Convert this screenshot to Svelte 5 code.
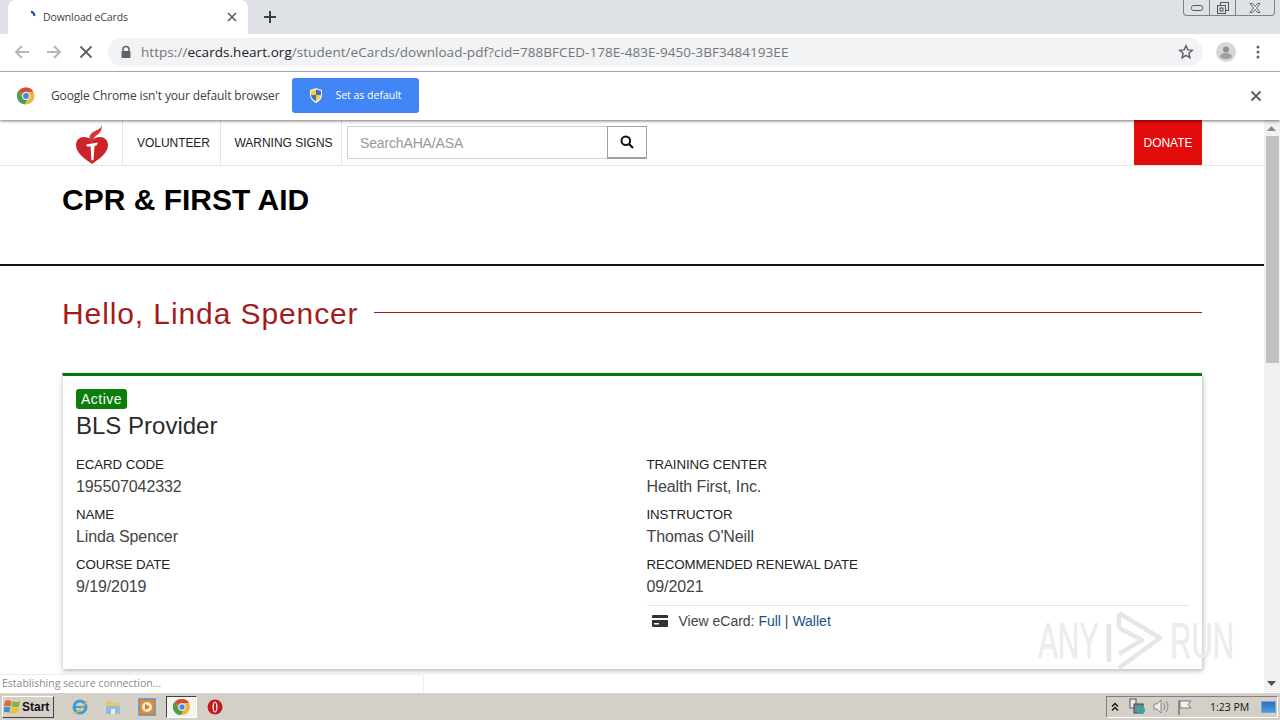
<script>
  const left = [["ECARD CODE","195507042332"],["NAME","Linda Spencer"],["COURSE DATE","9/19/2019"]];
  const right = [["TRAINING CENTER","Health First, Inc."],["INSTRUCTOR","Thomas O'Neill"],["RECOMMENDED RENEWAL DATE","09/2021"]];
</script>

<div class="screen">
  <header class="tabstrip">
    <div class="tab">
      <svg class="spin" width="16" height="16" viewBox="0 0 16 16"><path d="M4 2.500c2 .6 3.200 2 3.600 4.500" fill="none" stroke="#1a4a9c" stroke-width="2"/></svg>
      <span class="tabtitle">Download eCards</span>
      <svg class="tabx" width="12" height="12" viewBox="0 0 12 12"><path d="M2 2l8 8M10 2l-8 8" stroke="#5f6368" stroke-width="1.700"/></svg>
    </div>
    <svg class="plus" width="14" height="14" viewBox="0 0 14 14"><path d="M7 1v12M1 7h12" stroke="#3c4043" stroke-width="2"/></svg>
    <div class="winctl">
      <span class="wc w1"><svg width="14" height="8" viewBox="0 0 14 8"><rect x="1.500" y="1.500" width="11" height="5" rx="2" fill="none" stroke="#555"/></svg></span>
      <span class="wc w2"><svg width="14" height="14" viewBox="0 0 14 14"><rect x="4.500" y="1.500" width="8" height="8" fill="none" stroke="#555"/><rect x="1.500" y="4.500" width="8" height="8" fill="#dee1e6" stroke="#555"/><rect x="4" y="7" width="3" height="3" fill="none" stroke="#555"/></svg></span>
      <span class="wc w3"><svg width="14" height="12" viewBox="0 0 14 12"><path d="M2 1.500h2.500l2.500 3 2.500-3H12L8.500 6 12 10.500H9.500L7 7.500l-2.500 3H2L5.500 6z" fill="#eee" stroke="#666"/></svg></span>
    </div>
  </header>

  <div class="toolbar">
    <svg width="16" height="16" viewBox="0 0 16 16"><path d="M15 8H2M8 2L2 8l6 6" fill="none" stroke="#b4b6b9" stroke-width="2"/></svg>
    <svg class="fw" width="16" height="16" viewBox="0 0 16 16"><path d="M1 8h13M8 2l6 6-6 6" fill="none" stroke="#b4b6b9" stroke-width="2"/></svg>
    <svg class="st" width="14" height="14" viewBox="0 0 14 14"><path d="M1.500 1.500l11 11M12.500 1.500l-11 11" stroke="#5f6368" stroke-width="1.900"/></svg>
    <div class="omni">
      <svg class="lock" width="12" height="14" viewBox="0 0 12 14"><path d="M3 6V4.500a3 3 0 0 1 6 0V6" fill="none" stroke="#5f6368" stroke-width="1.500"/><rect x="1.500" y="6" width="9" height="7" rx="1" fill="#5f6368"/></svg>
      <span class="url"><span class="dim">https://</span>ecards.heart.org<span class="dim">/student/eCards/download-pdf?cid=788BFCED-178E-483E-9450-3BF3484193EE</span></span>
      <svg class="star" width="16" height="16" viewBox="0 0 16 16"><path d="M8 1.800l1.800 4.100 4.400.4-3.300 2.900 1 4.400L8 11.300l-3.900 2.300 1-4.400L1.800 6.300l4.400-.4z" fill="none" stroke="#5f6368" stroke-width="1.500"/></svg>
    </div>
    <svg class="avatar" width="20" height="20" viewBox="0 0 20 20"><circle cx="10" cy="10" r="10" fill="#d5d6d8"/><circle cx="10" cy="7.500" r="3" fill="#8d8f92"/><ellipse cx="10" cy="14" rx="6" ry="3" fill="#9d9fa2"/></svg>
    <svg class="menu" width="4" height="14" viewBox="0 0 4 14"><circle cx="2" cy="2" r="1.500" fill="#5f6368"/><circle cx="2" cy="7" r="1.500" fill="#5f6368"/><circle cx="2" cy="12" r="1.500" fill="#5f6368"/></svg>
  </div>

  <div class="infobar">
    <svg class="chrome" width="18" height="18" viewBox="0 0 18 18">
      <circle cx="9" cy="9" r="8.500" fill="#e8b93a"/>
      <path d="M9 .5a8.500 8.500 0 0 1 7.400 4.300H9a4.200 4.200 0 0 0-4 2.900L2 3.300A8.500 8.500 0 0 1 9 .5z" fill="#d9483b"/>
      <path d="M2 3.300l3.300 6.500A4.200 4.200 0 0 0 10 13l-2.300 4.400A8.500 8.500 0 0 1 2 3.300z" fill="#4a9e56"/>
      <circle cx="9" cy="9" r="3.600" fill="#4c84e0" stroke="#fff" stroke-width="1"/>
    </svg>
    <span class="infotext">Google Chrome isn't your default browser</span>
    <button class="setdefault">
      <svg width="16" height="17" viewBox="0 0 16 17"><path d="M8 1l6 2v5c0 4-3 6.500-6 8-3-1.500-6-4-6-8V3z" fill="#f0f0f0"/><path d="M8 2.500L13 4v4H8z" fill="#3d6fc4"/><path d="M8 8H3c.2 3 2.500 5 5 6.300z" fill="#3d6fc4"/><path d="M8 2.500L3 4v4h5z" fill="#f3cf45"/><path d="M8 8h5c-.2 3-2.500 5-5 6.300z" fill="#f3cf45"/></svg>
      <span>Set as default</span>
    </button>
    <svg class="infox" width="12" height="12" viewBox="0 0 12 12"><path d="M1.500 1.500l9 9M10.500 1.500l-9 9" stroke="#5f6368" stroke-width="2"/></svg>
  </div>

  <div class="viewport">
    <main class="page">
      <nav class="topnav">
        <div class="navinner">
          <div class="logo">
            <svg width="32" height="40" viewBox="0 0 32 40">
              <path d="M16 40C9 35 0 29 0 21c0-5 3.500-8 8-8 3.500 0 6 1.500 8 4 2-2.500 4.500-4 8-4 4.500 0 8 3 8 8 0 8-9 14-16 19z" fill="#c9252b"/>
              <path d="M25 0c1 4-2 5-6 7-4 2-7 5-5 11h4c-1-3 0-5 3-7 3-2 6-6 4-11z" fill="#d9333a"/>
              <path d="M10 20.500l12-2-1.500 3-2 .4L17.500 36 15.500 36.500 14.500 22.200l-3 .5z" fill="#fff"/>
            </svg>
          </div>
          <a class="navitem vol">VOLUNTEER</a>
          <a class="navitem warn">WARNING SIGNS</a>
          <div class="search">
            <span class="field">SearchAHA/ASA</span>
            <span class="sbtn"><svg width="14" height="14" viewBox="0 0 14 14"><circle cx="5.800" cy="5.800" r="4.300" fill="none" stroke="#111" stroke-width="2"/><path d="M9 9l4 4" stroke="#111" stroke-width="2.200"/></svg></span>
          </div>
          <a class="donate">DONATE</a>
        </div>
      </nav>

      <div class="brand"><h1>CPR &amp; FIRST AID</h1></div>

      <section class="content">
        <div class="hello"><h2>Hello, Linda Spencer</h2><span class="rule"></span></div>

        <article class="card">
          <span class="badge">Active</span>
          <h3>BLS Provider</h3>
          <div class="cols">
            <div class="col">
              {#each left as [k, v]}
                <div class="pair"><div class="k">{k}</div><div class="v">{v}</div></div>
              {/each}
            </div>
            <div class="col">
              {#each right as [k, v]}
                <div class="pair"><div class="k">{k}</div><div class="v">{v}</div></div>
              {/each}
              <div class="view">
                <svg width="16" height="12" viewBox="0 0 16 12"><path d="M1 0h14a1 1 0 0 1 1 1v10a1 1 0 0 1-1 1H1a1 1 0 0 1-1-1V1a1 1 0 0 1 1-1z" fill="#333"/><rect x="0" y="3" width="16" height="2" fill="#fff"/><rect x="2" y="8" width="5" height="1.500" fill="#fff"/></svg>
                <span class="vt">View eCard: <a>Full</a> | <a>Wallet</a></span>
              </div>
            </div>
          </div>
        </article>
      </section>
    </main>

    <aside class="scrollbar">
      <svg class="up" width="9" height="5" viewBox="0 0 9 5"><path d="M4.500 0L9 5H0z" fill="#8a8a8a"/></svg>
      <span class="thumb"></span>
      <svg class="down" width="9" height="5" viewBox="0 0 9 5"><path d="M4.500 5L0 0h9z" fill="#505050"/></svg>
    </aside>

    <div class="status">Establishing secure connection...</div>

    <div class="watermark">
      <span class="wmt any">ANY</span>
      <svg width="58" height="62" viewBox="0 0 58 62"><path d="M3 14V52M13 3L54 28 13 58M13 3V18M13 18L36 30 13 44" fill="none" stroke="#e6e6e6" stroke-width="4.500" stroke-linejoin="round"/></svg>
      <span class="wmt run">RUN</span>
    </div>
  </div>

  <footer class="taskbar">
    <button class="start">
      <svg width="17" height="16" viewBox="0 0 16 15"><path d="M1 2c2-1 4-1 6 0l-1 5c-2-1-4-1-6 0z" fill="#e5672d"/><path d="M8 2c2 1 5 1 7 0l-1 5c-2 1-5 1-7 0z" fill="#7fb53c"/><path d="M0 8c2-1 4-1 6 0l-1 5c-2-1-4-1-6 0z" fill="#3f8fd6"/><path d="M7 8c2 1 5 1 7 0l-1 5c-2 1-5 1-7 0z" fill="#f1c232"/></svg>
      <span>Start</span>
    </button>
    <div class="apps">
      <svg width="18" height="18" viewBox="0 0 18 18"><circle cx="9" cy="9" r="6" fill="none" stroke="#3f9ad8" stroke-width="3"/><path d="M4 9h10" stroke="#3f9ad8" stroke-width="2"/><path d="M2 15c3 1 10-5 14-12" fill="none" stroke="#e2b53a" stroke-width="1.500"/></svg>
      <svg width="18" height="18" viewBox="0 0 18 18"><path d="M2 3h6l1 2h7v11H2z" fill="#e3c66f"/><rect x="2" y="8" width="14" height="8" fill="#8fc0d8"/><rect x="7" y="11" width="4" height="5" fill="#e9eef2"/></svg>
      <svg class="media" width="18" height="18" viewBox="0 0 18 18"><rect x="1" y="1" width="16" height="16" fill="#e98a2a" stroke="#5d8fc4" stroke-width="1.500"/><circle cx="9" cy="9" r="5" fill="#f7f0e0"/><path d="M7 6l5 3-5 3z" fill="#e0781a"/></svg>
      <span class="active"><svg width="18" height="18" viewBox="0 0 18 18"><circle cx="9" cy="9" r="8" fill="#e8b93a"/><path d="M9 1a8 8 0 0 1 7 4H9a4 4 0 0 0-4 3L2 3.500A8 8 0 0 1 9 1z" fill="#d9483b"/><path d="M2 3.500l3 6A4 4 0 0 0 10 13l-2 4A8 8 0 0 1 2 3.500z" fill="#4a9e56"/><circle cx="9" cy="9" r="3.300" fill="#4c84e0" stroke="#fff"/></svg></span>
      <svg class="opera" width="16" height="16" viewBox="0 0 16 16"><circle cx="8" cy="8" r="7.500" fill="#c8171c"/><ellipse cx="8" cy="8" rx="2.500" ry="5.500" fill="#fff"/><ellipse cx="8" cy="8" rx="1.200" ry="4.500" fill="#c8171c"/></svg>
    </div>
    <div class="tray">
      <svg width="8" height="10" viewBox="0 0 8 10"><path d="M1 4.500l3-3 3 3M1 8.500l3-3 3 3" fill="none" stroke="#111" stroke-width="1.400"/></svg>
      <svg class="net" width="17" height="17" viewBox="0 0 17 17"><rect x="1" y="1" width="6" height="9" fill="#eee" stroke="#555"/><rect x="5" y="6" width="9" height="9" fill="#6d8aa0" stroke="#444"/><circle cx="12" cy="12" r="4" fill="#3ba7a0"/></svg>
      <svg width="17" height="15" viewBox="0 0 17 15"><path d="M1 5h3l4-4v13l-4-4H1z" fill="#eee" stroke="#888"/><path d="M10.500 4c1.500 2 1.500 5 0 7M13 2c2.500 3 2.500 8 0 11" fill="none" stroke="#888"/></svg>
      <svg width="16" height="16" viewBox="0 0 16 16"><path d="M2 1v15" stroke="#777" stroke-width="1.500"/><path d="M3 2h11l-3 3.500L14 9H3z" fill="#f2f2f2" stroke="#777"/></svg>
      <span class="clock">1:23 PM</span>
      <span class="desktop"></span>
    </div>
  </footer>
</div>

<style>
  :global(body) { margin: 0; overflow: hidden; }
  .screen { width: 1280px; height: 720px; display: flex; flex-direction: column; font-family: "Liberation Sans", Arial, sans-serif; background: #fff; overflow: hidden; }
  svg { display: block; flex: none; }

  .tabstrip { height: 34px; background: #dee1e6; display: flex; align-items: flex-end; position: relative; flex: none; }
  .tab { width: 240px; height: 34px; margin-left: 8px; background: #fff; border-radius: 8px 8px 0 0; display: flex; align-items: center; box-sizing: border-box; padding: 0 10px 0 19px; }
  .tabtitle { font-family: "Open Sans", sans-serif; font-size: 10.500px; color: #3c4043; flex: 1; letter-spacing: -.1px; }
  .plus { margin: 0 0 10px 15px; }
  .winctl { position: absolute; top: 0; right: 5px; width: 92px; height: 16px; display: flex; border: 1px solid #7c8087; border-top: 0; border-radius: 0 0 4px 4px; box-sizing: border-box; }
  .wc { display: flex; align-items: center; justify-content: center; border-right: 1px solid #7c8087; }
  .w1 { width: 25px; } .w2 { width: 25px; } .w3 { flex: 1; border-right: 0; }

  .toolbar { height: 35px; background: #fff; border-bottom: 1px solid #b9babc; display: flex; align-items: center; flex: none; padding: 0 0 2px 14px; }
  .fw { margin-left: 16px; }
  .st { margin-left: 17px; }
  .omni { width: 1095px; height: 28px; margin-left: 15px; background: #f1f3f4; border-radius: 14px; display: flex; align-items: center; position: relative; box-sizing: border-box; padding-left: 12px; }
  .url { font-family: "Open Sans", sans-serif; font-size: 13.500px; letter-spacing: .05px; margin-left: 9px; color: #202124; white-space: nowrap; }
  .dim { color: #72767a; }
  .star { position: absolute; right: 9px; top: 6px; }
  .avatar { margin-left: 13px; }
  .menu { margin-left: 20px; }

  .infobar { height: 48px; background: #fff; display: flex; align-items: center; flex: none; position: relative; padding-left: 17px; box-shadow: 0 1px 3px rgba(0,0,0,.55); z-index: 3; }
  .infotext { font-family: "Open Sans", sans-serif; font-size: 12px; color: #3c4043; margin: 0 0 2px 16px; white-space: nowrap; letter-spacing: -.14px; }
  .setdefault { margin: 0 0 2px 13px; width: 127px; height: 35px; border: 0; border-radius: 3px; background: #4285f4; color: #fff; font-family: "Open Sans", sans-serif; font-size: 10.500px; display: flex; align-items: center; padding: 0 0 0 16px; gap: 11px; }
  .infox { position: absolute; right: 18px; top: 18px; }

  .viewport { flex: 1; display: flex; position: relative; min-height: 0; }
  .page { flex: 1; min-width: 0; overflow: hidden; }
  .topnav { height: 46px; border-bottom: 1px solid #e5e5e5; box-sizing: border-box; }
  .navinner { margin: 0 62px; display: flex; height: 45px; }
  .logo { width: 60px; box-sizing: border-box; padding: 4px 0 0 14px; }
  .navitem { font-size: 12px; color: #222; display: flex; align-items: center; justify-content: center; border-left: 1px solid #e5e5e5; box-sizing: border-box; }
  .vol { width: 98px; padding-left: 4px; letter-spacing: -.05px; }
  .warn { width: 122px; padding-left: 5px; border-right: 1px solid #e5e5e5; }
  .search { margin: 6px 0 0 5px; width: 300px; height: 33px; border: 1px solid #d0d0d0; box-sizing: border-box; display: flex; }
  .field { flex: 1; font-size: 14px; color: #999; padding: 8px 0 0 12px; letter-spacing: -.15px; }
  .sbtn { width: 40px; margin: -1px -1px -1px 0; border: 1px solid #a0a0a0; border-bottom: 2px solid #a0a0a0; display: flex; align-items: center; justify-content: center; box-sizing: border-box; }
  .donate { margin-left: auto; width: 68px; background: #e20c0c; color: #fff; font-size: 12px; letter-spacing: -.05px; display: flex; align-items: center; justify-content: center; }

  .brand { height: 98px; border-bottom: 2px solid #111; padding-left: 62px; }
  h1 { margin: 0; padding-top: 16px; font-size: 30px; line-height: 36px; font-weight: 700; color: #000; }
  .content { padding: 0 62px; }
  .hello { display: flex; align-items: center; height: 96px; box-sizing: border-box; gap: 15px; padding-bottom: 1px; }
  h2 { margin: 0; font-size: 30px; font-weight: 400; color: #a31c1c; letter-spacing: .9px; white-space: nowrap; }
  .rule { flex: 1; height: 1px; background: #a31c1c; margin-top: -2px; }

  .card { height: 296px; border-top: 3px solid #007a00; border-left: 1px solid #e0e0e0; box-shadow: 1px 2px 5px rgba(0,0,0,.28); box-sizing: border-box; padding: 13px 13px 0; background: #fff; margin-top: 11px; }
  .badge { display: block; width: 51px; height: 20px; box-sizing: border-box; background: #0a7d0a; color: #fff; font-size: 14px; letter-spacing: .5px; line-height: 20px; text-align: center; border-radius: 3px; }
  h3 { margin: 3px 0 0; font-size: 24px; line-height: 28px; font-weight: 400; color: #2b2b2b; }
  .cols { display: flex; margin-top: 12px; }
  .col { width: 570.500px; flex: none; }
  .col + .col { flex: 1; }
  .pair { height: 50px; }
  .k { font-size: 13.300px; line-height: 20px; color: #222; padding-top: 3px; letter-spacing: -.1px; }
  .v { font-size: 16px; line-height: 23px; color: #444; letter-spacing: -.1px; }
  .view { border-top: 1px solid #e3e3e3; margin-top: 3px; padding: 6px 0 0 5px; display: flex; align-items: center; height: 18px; }
  .vt { font-size: 14px; color: #444; margin-left: 11px; }
  .vt a { color: #1a4f8a; }

  .scrollbar { width: 16px; background: #f1f1f1; position: relative; flex: none; }
  .up { position: absolute; top: 6px; left: 3px; }
  .down { position: absolute; bottom: 6px; left: 3px; }
  .thumb { position: absolute; top: 16px; left: 2px; width: 13px; height: 227px; background: #c1c1c1; }

  .status { position: absolute; left: 0; bottom: 0; width: 424px; height: 18px; background: #fff; border-top: 1px solid #ededed; border-right: 1px solid #ededed; box-sizing: border-box; padding-left: 2px; font-family: "Open Sans", sans-serif; font-size: 10.500px; line-height: 17px; color: #8a8a8a; }

  .watermark { position: absolute; left: 1038px; top: 490px; width: 194px; height: 62px; display: flex; align-items: center; justify-content: space-between; color: #ececec; font-size: 50px; pointer-events: none; }
  .wmt { display: block; width: 62px; height: 50px; line-height: 50px; transform-origin: left center; transform: scaleX(.59); white-space: nowrap; text-shadow: 1px 1px 1px rgba(0,0,0,.06); }

  .taskbar { height: 28px; background: #d4d0c8; border-top: 1px solid #fff; box-sizing: border-box; display: flex; align-items: center; flex: none; position: relative; }
  .start { width: 52px; height: 22px; margin-left: 2px; background: #d4d0c8; border: 1px solid; border-color: #fff #404040 #404040 #fff; box-sizing: border-box; display: flex; align-items: center; gap: 1px; padding: 0 0 0 1px; font-family: "Liberation Sans", sans-serif; font-size: 12px; font-weight: 700; color: #111; }
  .apps { display: flex; align-items: center; margin-left: 17px; gap: 15px; }
  .media { margin-left: 1px; }
  .active { width: 31px; height: 22px; border: 1px solid; border-color: #404040 #fff #fff #404040; background: #f4f3f0; box-sizing: border-box; display: flex; align-items: center; justify-content: center; margin: 0 -9px 0 -5px; }
  .opera { margin-left: 4px; }
  .tray { margin-left: auto; margin-right: 2px; width: 172px; height: 22px; border: 1px solid #808080; border-right-color: #fff; border-bottom-color: #fff; box-sizing: border-box; display: flex; align-items: center; padding-left: 4px; gap: 7px; }
  .net { margin-left: 3px; }
  .clock { font-family: "Open Sans", sans-serif; font-size: 10.500px; color: #111; margin-left: 10px; white-space: nowrap; }
  .desktop { width: 13px; height: 10px; background: linear-gradient(#2f6fc0, #4a9ae0); border: 1px solid #7aa7d0; margin-left: 5px; }
</style>
